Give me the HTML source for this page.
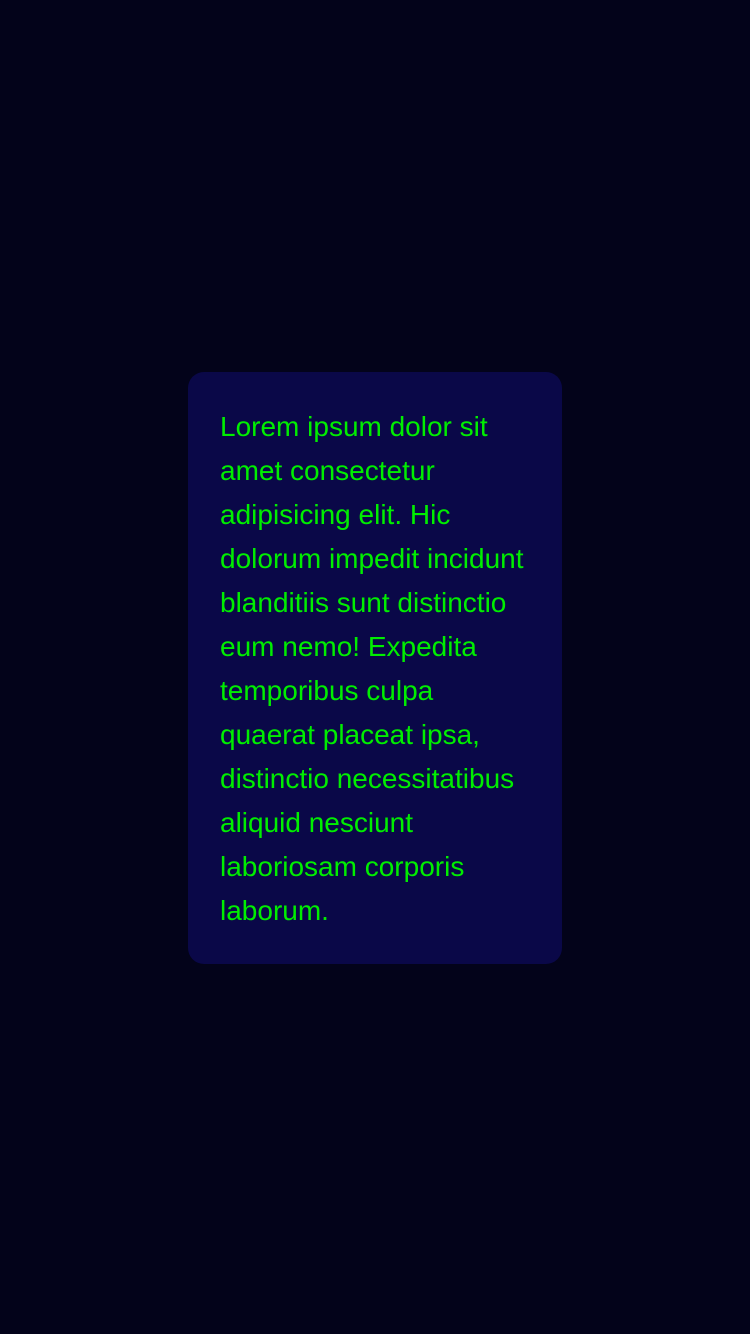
<!DOCTYPE html>
<html><head><meta charset="utf-8"><style>
html,body{margin:0;padding:0;background:#03031a;width:750px;height:1334px;overflow:hidden}
.card{position:absolute;left:188px;top:372px;width:310px;height:527px;padding:33px 32px 32px 32px;background:#0a0848;border-radius:16px;color:#00ee00;font-family:"Liberation Sans",sans-serif;font-size:28px;line-height:44px}
</style></head><body>
<div class="card">Lorem ipsum dolor sit amet consectetur adipisicing elit. Hic dolorum impedit incidunt blanditiis sunt distinctio eum nemo! Expedita temporibus culpa quaerat placeat ipsa, distinctio necessitatibus aliquid nesciunt laboriosam corporis laborum.</div>
</body></html>
